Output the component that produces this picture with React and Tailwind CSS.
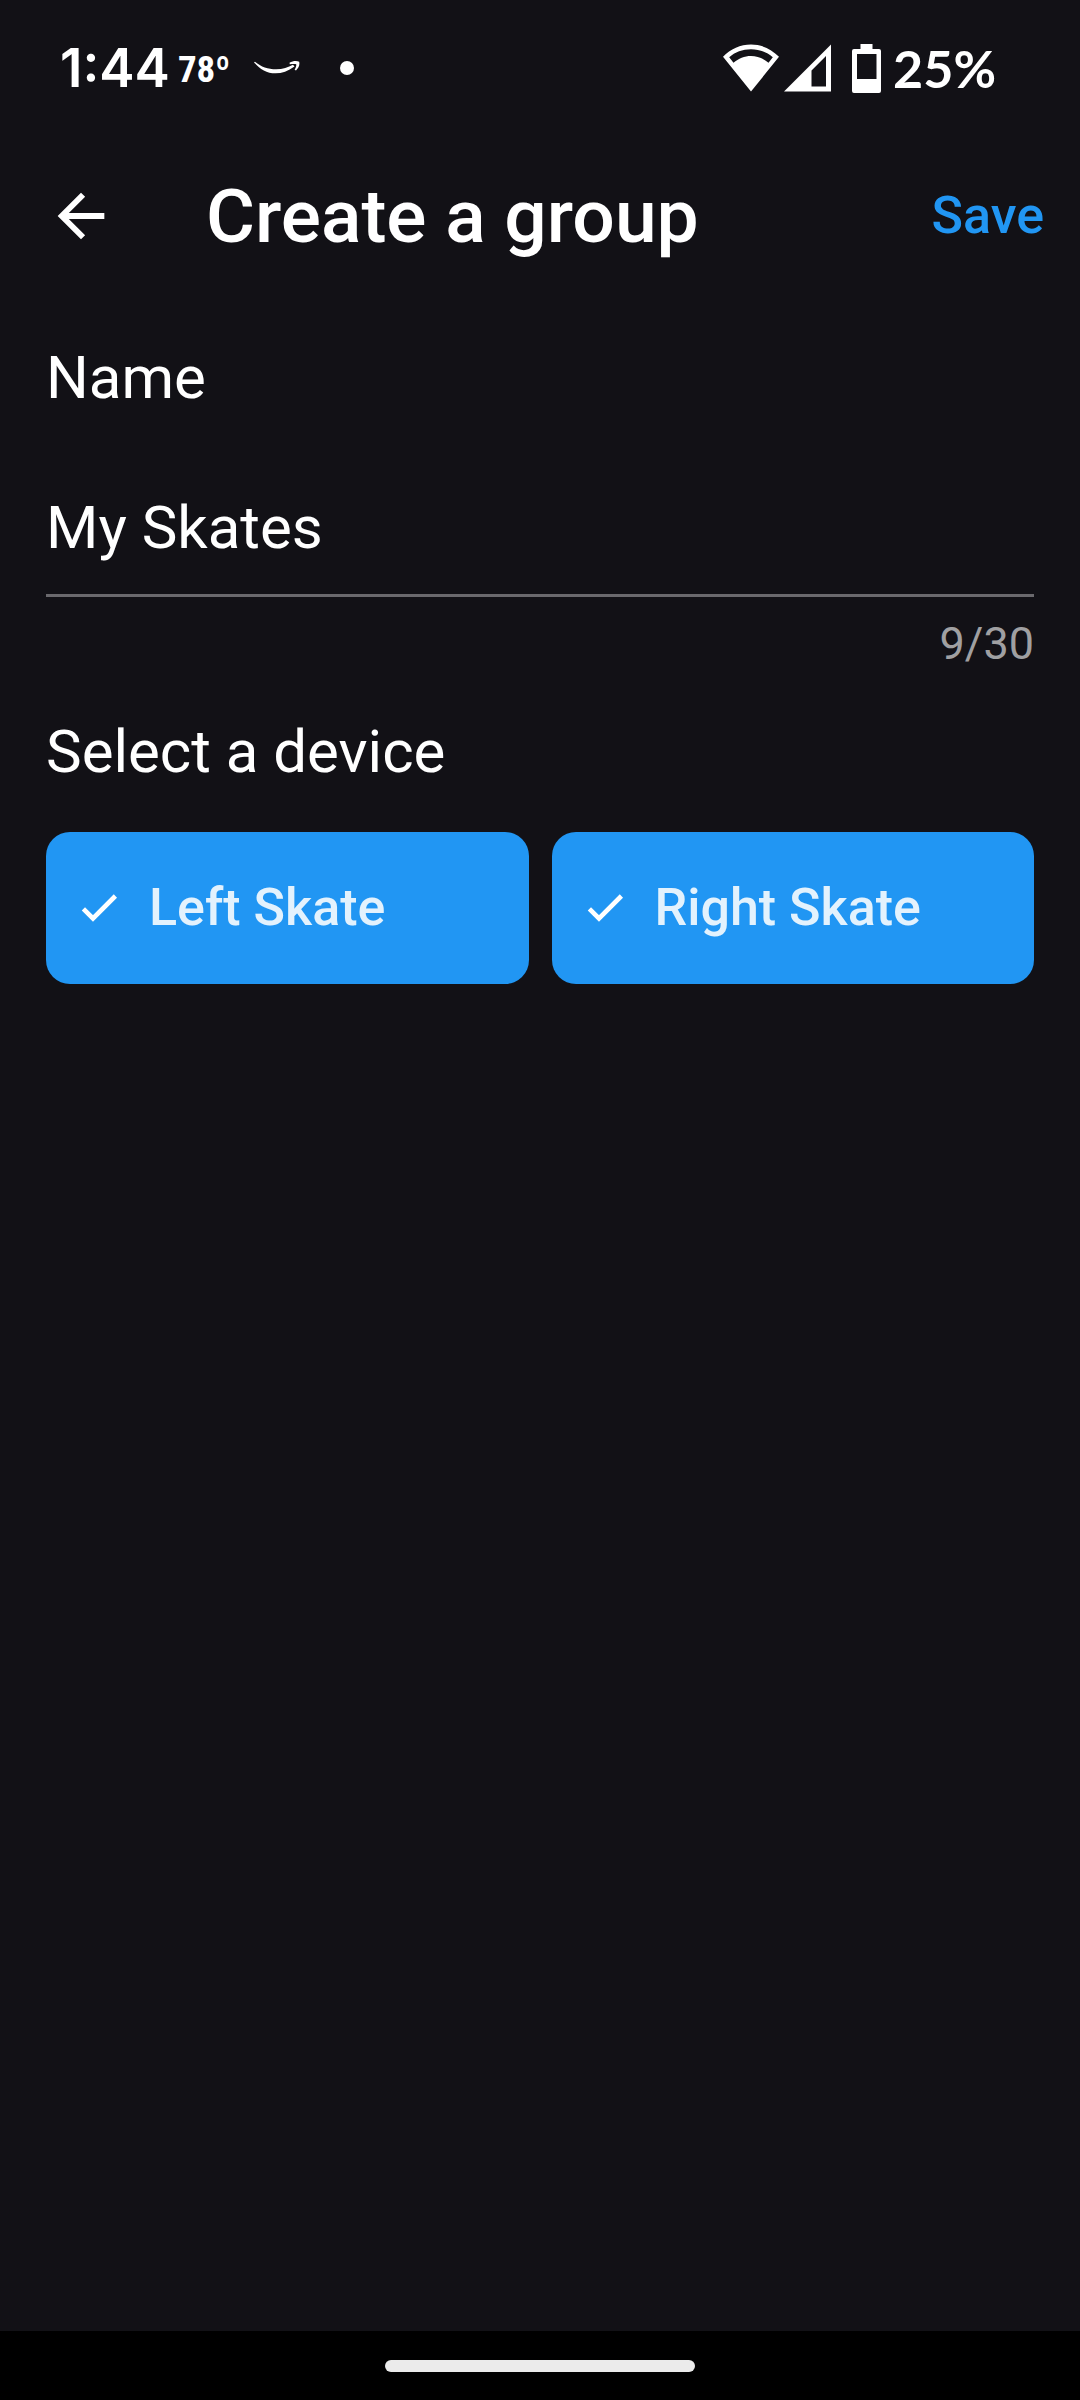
import { useState } from 'react';

const MAX_NAME = 30;

const DEVICES = [
  { id: 'left', label: 'Left Skate' },
  { id: 'right', label: 'Right Skate' },
];

function StatusBar() {
  return (
    <div className="h-[136px] pl-[60px] pr-[84px] flex items-center justify-between">
      <div className="flex items-center">
        <span className="font-['Inter',sans-serif] font-semibold text-[53px] leading-[64px]">1:44</span>
        <span className="ml-2 pt-1 font-['Roboto_Condensed','Roboto',sans-serif] font-bold text-[37px] leading-[48px]">78º</span>
        <svg className="ml-6 w-[46px] h-[14px]" viewBox="0 0 46 14" fill="currentColor">
          <path d="M0 1.200L1 0.800C7 6 14 8.300 22 8.300C29 8.300 34 6.500 39 3.800L40.500 5.400C34 10 28 12.300 21.500 12.300C13 12.300 6 8.500 0 1.200Z" />
          <path d="M35.500 1.800C39 -0.300 43 -0.200 45.200 0.800C46 4 44.500 7 42 9.500L40.600 8.800C41.800 6.500 42.600 4.500 42.200 3.200C41 2.600 38 3 35.800 3.200Z" />
        </svg>
        <span className="ml-10 size-[14px] rounded-full bg-white" />
      </div>
      <div className="flex items-center">
        <svg className="w-[56px] h-[48px]" viewBox="0 0 56 48" fill="currentColor">
          <path fillRule="evenodd" d="M28 0.500C17.500 0.500 7.500 5 0 12.800L28 47.500L56 12.800C48.500 5 38.500 0.500 28 0.500ZM28 5.200C36.500 5.200 44 8 49.800 13.200L45.500 18.800C40.500 14.500 34.500 12 28 12C21.500 12 15.500 14.500 10.500 18.800L6.200 13.200C12 8 19.500 5.200 28 5.200Z" />
        </svg>
        <svg className="ml-[5px] w-[47px] h-[48px]" viewBox="0 0 47 48" fill="currentColor">
          <path fillRule="evenodd" d="M47 0.500V47.500H0ZM42 12L27.500 26.500V42.500H42Z" />
        </svg>
        <svg className="ml-[21px] w-[29px] h-[49px]" viewBox="0 0 29 49" fill="currentColor">
          <path fillRule="evenodd" d="M8.500 0H20.500V5H27A2 2 0 0 1 29 7V47A2 2 0 0 1 27 49H2A2 2 0 0 1 0 47V7A2 2 0 0 1 2 5H8.500ZM5 10V35H24.500V10Z" />
        </svg>
        <span className="ml-3 font-['Lato',sans-serif] font-bold text-[52px] leading-[64px]">25%</span>
      </div>
    </div>
  );
}

function DeviceOption({ label, checked, onChange }) {
  return (
    <label className={`relative flex-1 h-[152px] pl-[29px] flex items-center rounded-3xl cursor-pointer ${checked ? 'bg-[#2196f3]' : 'bg-[#2a2a30]'}`}>
      <input type="checkbox" checked={checked} onChange={onChange} className="absolute inset-0 appearance-none rounded-3xl cursor-pointer" />
      <svg className={`w-12 h-12 ${checked ? '' : 'invisible'}`} viewBox="0 0 24 24" fill="none" stroke="currentColor" strokeWidth="2.300">
        <path d="M4.200 12.400L9 17.200L20.200 6" />
      </svg>
      <span className="ml-[26px] font-medium text-[52px] leading-[66px] text-[#e3f2fd]">{label}</span>
    </label>
  );
}

export default function App() {
  const [name, setName] = useState('My Skates');
  const [selected, setSelected] = useState(['left', 'right']);

  const toggle = (id) => {
    setSelected(selected.includes(id) ? selected.filter(s => s !== id) : [...selected, id]);
  };

  return (
    <div className="min-h-screen flex flex-col bg-[#121116] text-white font-['Roboto',sans-serif]">
      <StatusBar />

      <header className="h-[160px] pl-[46px] pr-[36px] flex items-center">
        <button type="button" aria-label="Back">
          <svg className="size-[70px]" viewBox="0 0 24 24" fill="currentColor">
            <path d="M20 11H7.830l5.590-5.590L12 4l-8 8 8 8 1.410-1.410L7.830 13H20v-2z" />
          </svg>
        </button>
        <h1 className="ml-[90px] flex-1 font-medium text-[75px] leading-[88px]">Create a group</h1>
        <button type="button" className="font-medium text-[52px] leading-[66px] text-[#2196f3]">Save</button>
      </header>

      <main className="flex-1 px-[46px] pt-[46px]">
        <label htmlFor="group-name" className="block text-[60px] leading-[72px]">Name</label>
        <input
          id="group-name"
          type="text"
          maxLength={MAX_NAME}
          value={name}
          onChange={e => setName(e.target.value)}
          className="block mt-12 w-full h-[135px] pb-0.5 border-b-3 border-[#6a696d] bg-transparent text-[60px] leading-[72px] outline-none"
        />
        <p className="mt-[21px] text-right text-[45px] leading-[52px] text-[#a0a0a2]">{name.length}/{MAX_NAME}</p>

        <fieldset className="mt-[46px]">
          <legend className="text-[60px] leading-[72px]">Select a device</legend>
          <div className="mt-11 flex gap-[23px]">
            {DEVICES.map(device => (
              <DeviceOption
                key={device.id}
                label={device.label}
                checked={selected.includes(device.id)}
                onChange={() => toggle(device.id)}
              />
            ))}
          </div>
        </fieldset>
      </main>

      {/* Gesture bar */}
      <div className="h-[69px] flex items-center justify-center bg-black">
        <div className="w-[310px] h-3 rounded-full bg-[#ebebeb]" />
      </div>
    </div>
  );
}
